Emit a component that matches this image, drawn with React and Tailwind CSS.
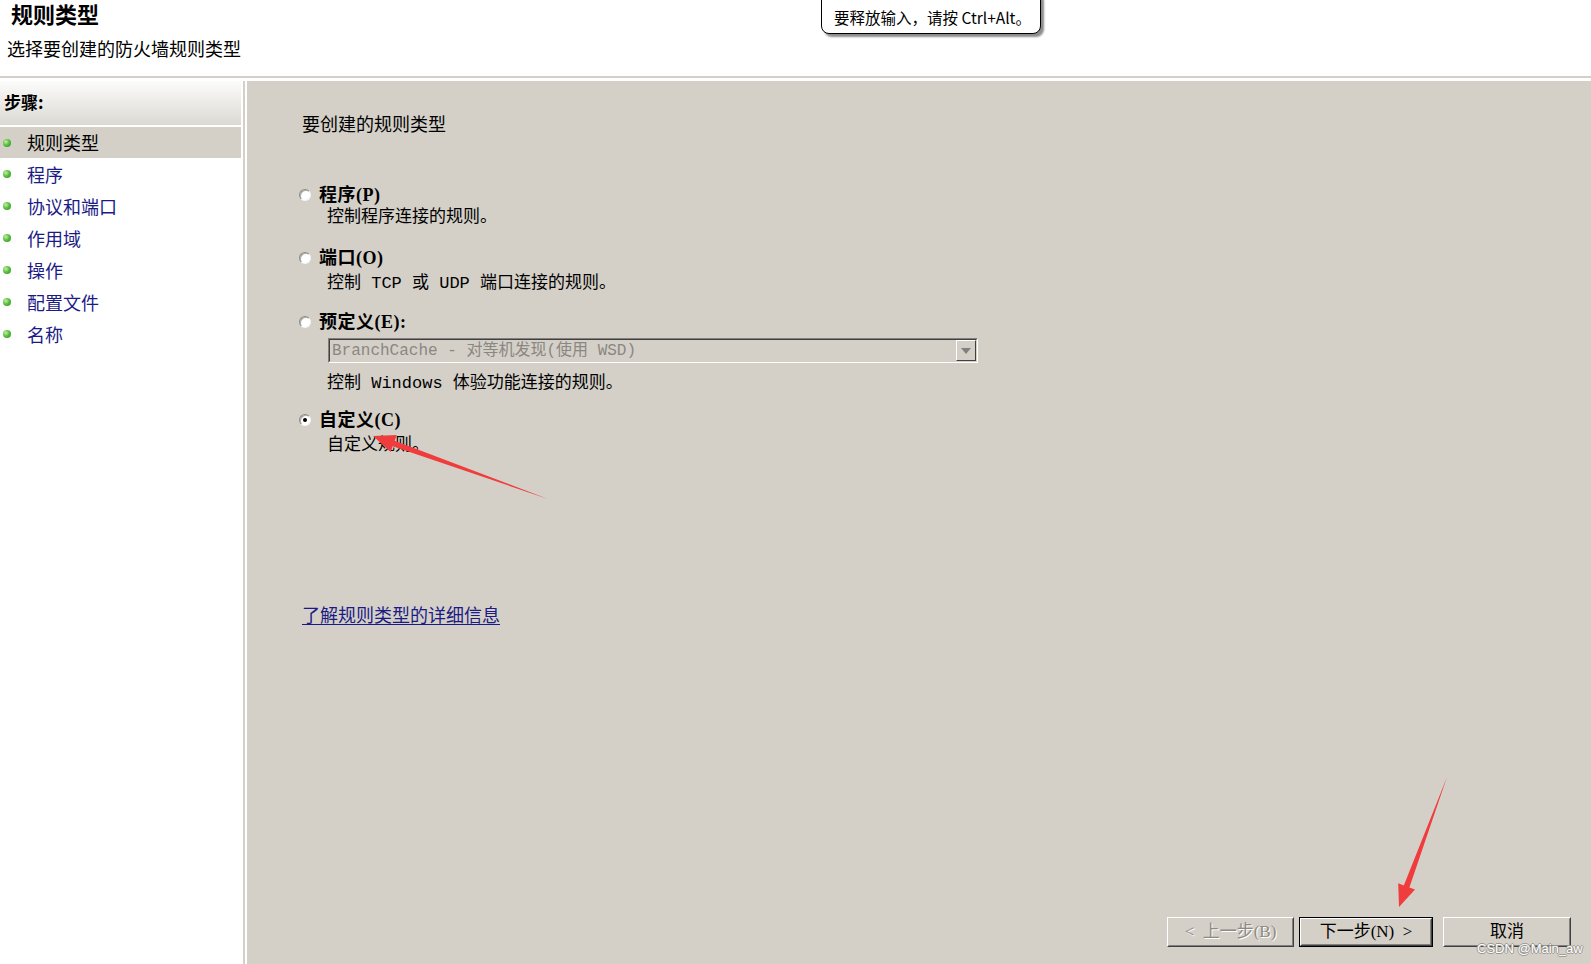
import React from "react";

const CJK = "font-['Noto_Sans_CJK_SC',sans-serif]";
const MONO = "font-['Liberation_Mono','Noto_Sans_CJK_SC',monospace]";
const SERIF = "font-['Liberation_Serif','Noto_Sans_CJK_SC',serif]";

function Bullet() {
  return (
    <span className="w-[8px] h-[8px] rounded-full bg-[radial-gradient(circle_at_35%_35%,#c8f0a8_0%,#58c040_45%,#2f8a1e_100%)] shrink-0" />
  );
}

function Radio({ checked }) {
  return (
    <span className="w-[12px] h-[12px] rounded-full border border-t-[#8a8a8a] border-l-[#8a8a8a] border-b-[#f4f4f4] border-r-[#f4f4f4] bg-white flex items-center justify-center shrink-0 shadow-[inset_1px_1px_0_#b0aca4]">
      {checked && <span className="w-[4px] h-[4px] rounded-full bg-black" />}
    </span>
  );
}

function Option({ label, checked, children }) {
  return (
    <div className="flex flex-col">
      <div className="flex items-center h-[20px] ml-[52px]">
        <Radio checked={checked} />
        <span className={`${SERIF} ml-[8px] text-[18px] tracking-[0.5px] font-bold text-black leading-[20px]`}>{label}</span>
      </div>
      {children}
    </div>
  );
}

function Btn({ children, primary, disabled, w, extra = "" }) {
  return (
    <div className={`${w} ${extra} h-[30px] ${primary ? "border border-black" : ""}`}>
      <div className="w-full h-full border border-t-white border-l-white border-b-[#404040] border-r-[#404040] bg-[#d4d0c8]">
        <div className={`w-full h-full border border-t-[#d4d0c8] border-l-[#d4d0c8] border-b-[#808080] border-r-[#808080] flex items-center justify-center ${SERIF} text-[17px] ${disabled ? "text-[#8d8a84] [text-shadow:1px_1px_0_#ffffff]" : "text-black"}`}>
          {children}
        </div>
      </div>
    </div>
  );
}

export default function App() {
  const steps = ["程序", "协议和端口", "作用域", "操作", "配置文件", "名称"];
  return (
    <div className={`relative w-[1591px] h-[964px] overflow-hidden bg-white flex flex-col ${CJK}`}>
      {/* Header */}
      <div className="h-[76px] pt-[2px] flex flex-col shrink-0">
        <div className="ml-[11px] text-[22px] font-bold text-black leading-[22px]">规则类型</div>
        <div className="ml-[7px] mt-[13px] text-[18px] text-black leading-[22px]">选择要创建的防火墙规则类型</div>
      </div>
      <div className="h-[2px] bg-[#d4d0c8] shrink-0" />
      <div className="h-[3px] shrink-0" />
      {/* Body */}
      <div className="flex flex-1 min-h-0">
        {/* Sidebar */}
        <div className="w-[243px] bg-white flex flex-col shrink-0">
          <div className="h-[44px] mr-[2px] bg-[linear-gradient(to_bottom,#fcfcfb,#dcd9d3)] flex items-center pl-[4px] pb-[3px]">
            <span className="text-[17px] font-bold text-black">步骤:</span>
          </div>
          <div className="h-[2px]" />
          <div className="h-[31px] mr-[2px] bg-[#d4d0c8] flex items-center pl-[3px]">
            <Bullet />
            <span className="ml-[16px] text-[18px] text-black">规则类型</span>
          </div>
          {steps.map((s) => (
            <div key={s} className="h-[32px] flex items-center pl-[3px]">
              <Bullet />
              <span className="ml-[16px] text-[18px] text-[#1b1b86]">{s}</span>
            </div>
          ))}
        </div>
        <div className="w-[2px] bg-[#d4d0c8] shrink-0" />
        <div className="w-[2px] bg-white shrink-0" />
        {/* Main */}
        <div className="flex-1 bg-[#d4d0c8] flex flex-col">
          <div className="mt-[32px] ml-[55px] text-[18px] leading-[20px] text-black">要创建的规则类型</div>

          <div className="mt-[52px]">
            <Option label="程序(P)">
              <div className={`${MONO} ml-[80px] mt-[3px] text-[17px] leading-[20px] text-black`}>控制程序连接的规则。</div>
            </Option>
          </div>

          <div className="mt-[20px]">
            <Option label="端口(O)">
              <div className={`${MONO} ml-[80px] mt-[6px] text-[17px] leading-[20px] text-black whitespace-pre`}>控制 TCP 或 UDP 端口连接的规则。</div>
            </Option>
          </div>

          <div className="mt-[18px]">
            <Option label="预定义(E):">
              <div className="ml-[81px] mt-[6px] w-[650px] h-[25px] border border-t-[#808080] border-l-[#808080] border-b-white border-r-white">
                <div className="w-full h-full border border-t-[#404040] border-l-[#404040] border-b-[#d4d0c8] border-r-[#d4d0c8] bg-[#d4d0c8] flex items-center">
                  <span className={`${MONO} flex-1 pl-[2px] text-[16px] text-[#8a8782] whitespace-pre leading-[20px]`}>BranchCache - 对等机发现(使用 WSD)</span>
                  <div className="w-[20px] h-full border border-t-white border-l-white border-b-[#404040] border-r-[#404040] flex items-center justify-center">
                    <svg width="10" height="6" viewBox="0 0 10 6"><path d="M0 0 H10 L5 6 Z" fill="#808080" /></svg>
                  </div>
                </div>
              </div>
              <div className={`${MONO} ml-[80px] mt-[11px] text-[17px] leading-[20px] text-black whitespace-pre`}>控制 Windows 体验功能连接的规则。</div>
            </Option>
          </div>

          <div className="mt-[16px]">
            <Option label="自定义(C)" checked>
              <div className={`${MONO} ml-[80px] mt-[6px] text-[17px] leading-[20px] text-black`}>自定义规则。</div>
            </Option>
          </div>

          <div className="mt-[147px] ml-[55px]">
            <span className="text-[18px] leading-[20px] text-[#1b1b86] underline underline-offset-2">了解规则类型的详细信息</span>
          </div>

          <div className="mt-auto mb-[17px] mr-[20px] flex justify-end">
            <Btn disabled w="w-[127px]"><span className="whitespace-pre">&lt;  上一步(B)</span></Btn>
            <Btn primary w="w-[134px]" extra="ml-[5px]"><span className="whitespace-pre">下一步(N)  &gt;</span></Btn>
            <Btn w="w-[128px]" extra="ml-[10px]">取消</Btn>
          </div>
        </div>
      </div>

      {/* Tooltip */}
      <div className="absolute left-[821px] top-[-10px] w-[220px] h-[44px] bg-white border border-black rounded-[8px] shadow-[3px_3px_2px_rgba(0,0,0,0.45)] flex items-end pb-[7px] pl-[12px]">
        <span className="text-[15.5px] leading-[18px] text-black whitespace-nowrap">要释放输入，请按 Ctrl+Alt。</span>
      </div>

      {/* Watermark */}
      <div className="absolute left-[1477px] top-[941px] text-[13px] leading-[16px] font-['Liberation_Sans',sans-serif] text-white [text-shadow:1px_0_0_#9a9790,-1px_0_0_#9a9790,0_1px_0_#9a9790,0_-1px_0_#9a9790]">
        CSDN @Main_aw
      </div>

      {/* Red arrows */}
      <svg className="absolute left-0 top-0 pointer-events-none" width="1591" height="964" viewBox="0 0 1591 964">
        <polygon points="548,499 394.7,440.7 396.75,435 373,436 390.65,452 392.7,446.3" fill="#f03c3c" />
        <polygon points="1447,777 1409.4,887.4 1415,889.5 1399,907 1398.2,883.3 1403.8,885.4" fill="#f03c3c" />
      </svg>
    </div>
  );
}
